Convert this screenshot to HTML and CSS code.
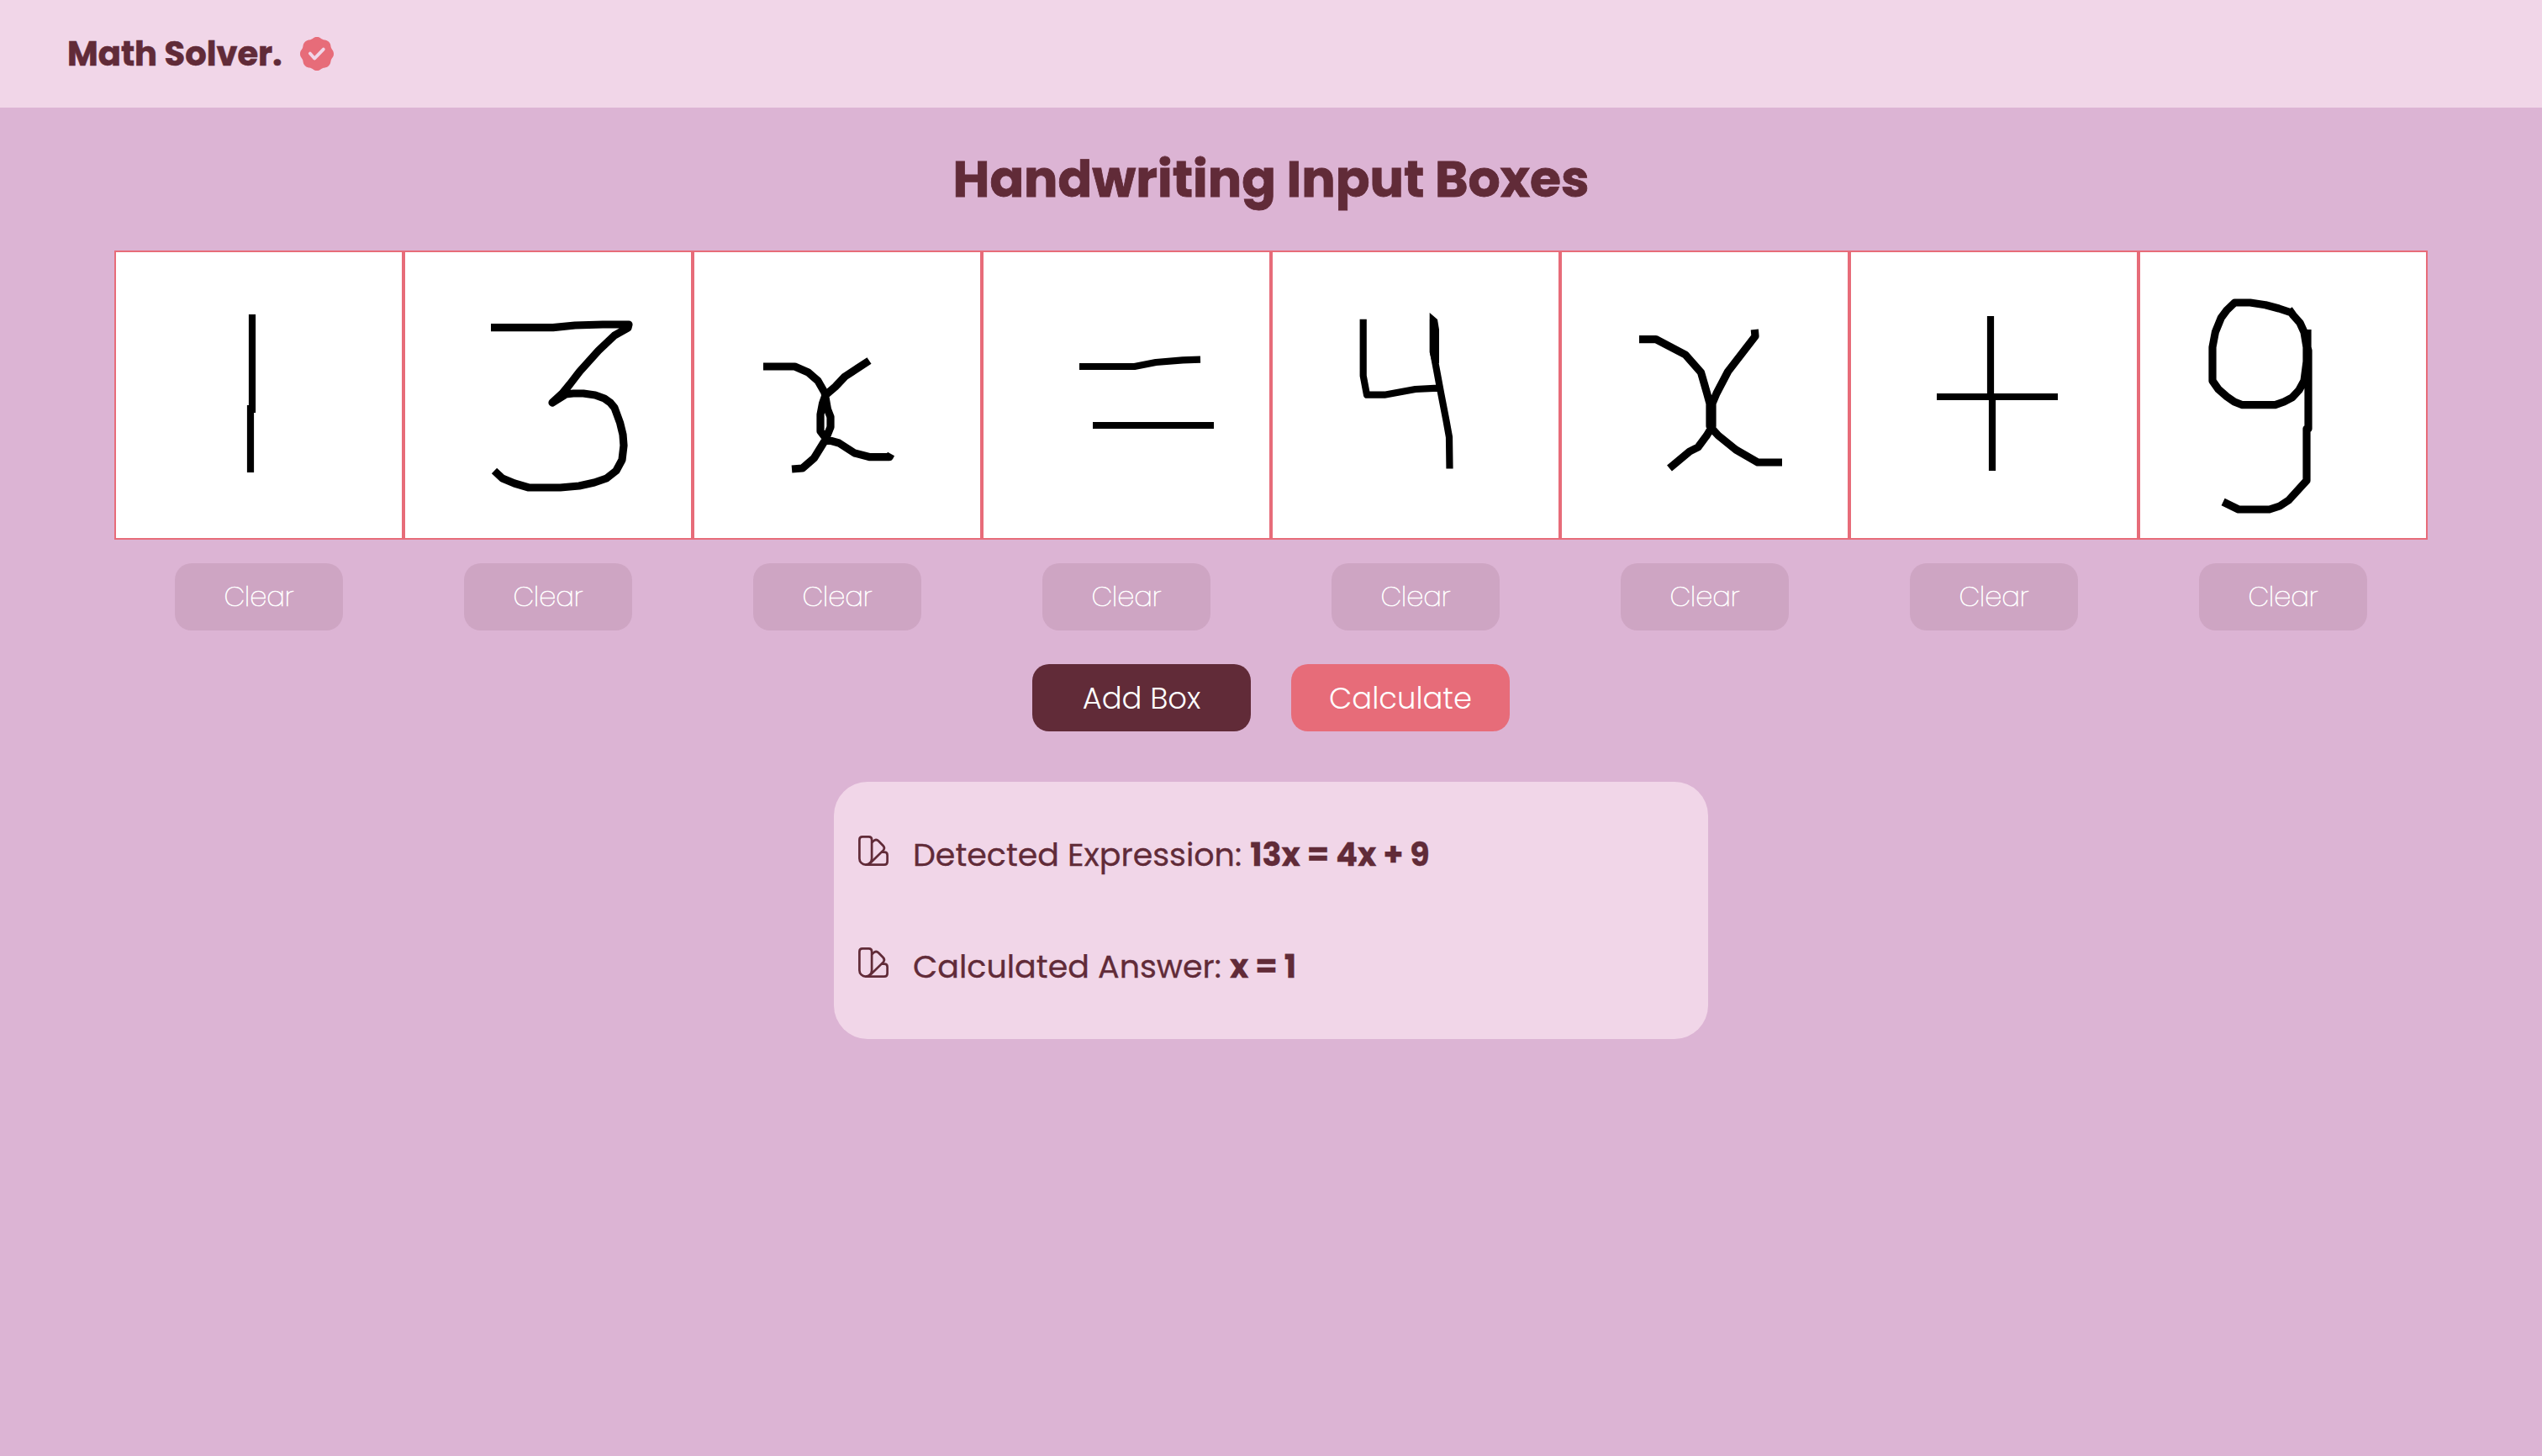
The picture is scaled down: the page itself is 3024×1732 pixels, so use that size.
FILE: index.html
```
<!DOCTYPE html>
<html lang="en">
<head>
  <meta charset="utf-8">
  <title>Math Solver</title>
  <link rel="stylesheet" href="styles.css">
</head>
<body>
  <header class="navbar">
    <span class="brand">Math Solver.</span>
    <svg class="badge" viewBox="-20 -20 40 40" aria-hidden="true">
      <path class="badge-shape" d="M0-20C3.8-20 4.82-17.92 7.04-17C9.26-16.08 11.45-16.83 14.14-14.14C16.83-11.45 16.08-9.26 17-7.04C17.92-4.82 20-3.8 20 0C20 3.8 17.92 4.82 17 7.04C16.08 9.26 16.83 11.45 14.14 14.14C11.45 16.83 9.26 16.08 7.04 17C4.82 17.92 3.8 20 0 20C-3.8 20-4.82 17.92-7.04 17C-9.26 16.08-11.45 16.83-14.14 14.14C-16.83 11.45-16.08 9.26-17 7.04C-17.92 4.82-20 3.8-20 0C-20-3.8-17.92-4.82-17-7.04C-16.08-9.26-16.83-11.45-14.14-14.14C-11.45-16.83-9.26-16.08-7.04-17C-4.82-17.92-3.8-20 0-20Z"/>
      <path class="badge-check" d="M-8.2-.4L-2.9 5.6L7.8-5.4"/>
    </svg>
  </header>

  <main class="main">
    <h1 class="title">Handwriting Input Boxes</h1>

    <section class="boxes">
      <div class="box">
        <svg class="canvas" viewBox="0 0 340 340"><path d="M162 74V191M160 182V262"/></svg>
        <button class="btn btn-clear">Clear</button>
      </div>
      <div class="box">
        <svg class="canvas curved" viewBox="0 0 340 340"><path d="M102 89.7H176L202 87L235 86H266L265 90L249 99L230 117L207.500 142L196 157L187 168L175 179L191 169L200 168H212L226 170L237 174L244 179L249 185L255.600 203L259 217L260 230L258 247L251 260L239.500 269L225 274L207 278L184.500 280H147L130 275L115.600 269L106 260"/></svg>
        <button class="btn btn-clear">Clear</button>
      </div>
      <div class="box">
        <svg class="canvas curved" viewBox="0 0 340 340"><path d="M82 136H119.500L135.500 143L147 153L155 167L158.500 187L162 196V208L156 223L142.400 245L128.600 257L116 258M208 129L179 148L167.700 160L156 170L152.500 180L150 193V213L157.600 223L172 227L190.600 239L209 243.700H232L234 240"/></svg>
        <button class="btn btn-clear">Clear</button>
      </div>
      <div class="box">
        <svg class="canvas" viewBox="0 0 340 340"><path d="M114 136H179.600L205 131L237 128.300L258 127.700M130 206H274"/></svg>
        <button class="btn btn-clear">Clear</button>
      </div>
      <div class="box">
        <svg class="canvas" viewBox="0 0 340 340"><path d="M107.700 79.700V147L112 169.700H133L169.700 163L197 161.700M191 80V119L195 140L200 167L206.400 200L210 220L210.500 257.500"/><path class="ink" d="M186.700 72L196 80L198 92V132L190 132L186.700 119Z"/></svg>
        <button class="btn btn-clear">Clear</button>
      </div>
      <div class="box">
        <svg class="canvas curved" viewBox="0 0 340 340"><path d="M92 103.700H112L147 122L165.500 143L172.400 167L176 180V207L186 218L207 235L233 250H262M229.300 92L230 100L197.600 142L184 168L179 180V207L172.400 218L162 232L152 237L128 257"/></svg>
        <button class="btn btn-clear">Clear</button>
      </div>
      <div class="box">
        <svg class="canvas" viewBox="0 0 340 340"><path d="M102 172H246M166 76V172M168 172V260"/></svg>
        <button class="btn btn-clear">Clear</button>
      </div>
      <div class="box">
        <svg class="canvas curved" viewBox="0 0 340 340"><path d="M180 72L165 67L149 62.700L130.800 60H112.400L103 69L96.300 78L89.400 95L86 113V153L93 163L103 171.700L112 178L121.600 181.700H160.600L171 178L181 172.700L189 164L195 153L198 130V113L195 95L190 84L182 75L177 68M199 92V113L200 117V210H198V271.700L176.700 295L166 302L153.700 306H117L98.600 297"/></svg>
        <button class="btn btn-clear">Clear</button>
      </div>
    </section>

    <div class="actions">
      <button class="btn btn-add">Add Box</button>
      <button class="btn btn-calc">Calculate</button>
    </div>

    <section class="card">
      <div class="row">
        <svg class="swatch" viewBox="0 0 36 36" aria-hidden="true">
          <path d="M5 1.400H12.500Q16.100 1.400 16.100 5V27.200A7.350 7.350 0 0 1 1.400 27.200V5Q1.400 1.400 5 1.400Z"/>
          <path d="M16.100 8.200L18.300 6.200Q21.300 3.600 24.200 6.500L29.600 12Q32.200 14.800 29.700 17.600L13.700 33.200"/>
          <path d="M27.800 19.600H31Q34.600 19.600 34.600 23.200V31Q34.600 34.600 31 34.600H8.700"/>
        </svg>
        <p class="text">Detected Expression: <b>13x = 4x + 9</b></p>
      </div>
      <div class="row">
        <svg class="swatch" viewBox="0 0 36 36" aria-hidden="true">
          <path d="M5 1.400H12.500Q16.100 1.400 16.100 5V27.200A7.350 7.350 0 0 1 1.400 27.200V5Q1.400 1.400 5 1.400Z"/>
          <path d="M16.100 8.200L18.300 6.200Q21.300 3.600 24.200 6.500L29.600 12Q32.200 14.800 29.700 17.600L13.700 33.200"/>
          <path d="M27.800 19.600H31Q34.600 19.600 34.600 23.200V31Q34.600 34.600 31 34.600H8.700"/>
        </svg>
        <p class="text">Calculated Answer: <b>x = 1</b></p>
      </div>
    </section>
  </main>
</body>
</html>
```
FILE: styles.css
```
* {
  box-sizing: border-box;
  margin: 0;
  padding: 0;
}

body {
  min-height: 100vh;
  background: #dcb4d4;
  color: #612b38;
  font-family: Poppins, Inter, sans-serif;
}

.navbar {
  display: flex;
  align-items: center;
  gap: 21px;
  height: 128px;
  padding: 0 80px;
  background: #f1d6e8;
}

.brand {
  font-size: 40px;
  font-weight: 700;
  line-height: 60px;
  -webkit-text-stroke: .6px #612b38;
}

.badge {
  width: 40px;
  height: 40px;
}

.badge-shape {
  fill: #e76c79;
}

.badge-check {
  fill: none;
  stroke: #f1d6e8;
  stroke-width: 3.8;
  stroke-linecap: round;
  stroke-linejoin: round;
}

.main {
  display: flex;
  flex-direction: column;
  align-items: center;
  padding-top: 40px;
}

.title {
  margin-bottom: 40px;
  font-size: 60px;
  font-weight: 700;
  line-height: 90px;
  -webkit-text-stroke: .8px #612b38;
}

.boxes {
  display: flex;
}

.box {
  display: flex;
  flex-direction: column;
  align-items: center;
  gap: 28px;
}

.canvas {
  width: 344px;
  height: 344px;
  border: 2px solid #e76c79;
  background: #fff;
  fill: none;
  stroke: #000;
  stroke-width: 8.2;
  stroke-linejoin: round;
}

.curved {
  stroke-width: 9.2;
}

.ink {
  fill: #000;
  stroke: none;
}

.btn {
  height: 80px;
  border: 0;
  border-radius: 20px;
  color: #fff;
  font-family: inherit;
}

.btn-clear {
  width: 200px;
  background: #cea5c3;
  font-size: 32px;
  font-weight: 200;
  -webkit-text-stroke: .7px #fff;
}

.actions {
  display: flex;
  gap: 48px;
  margin-top: 40px;
}

.btn-add,
.btn-calc {
  width: 260px;
  font-size: 35.4px;
  font-weight: 300;
}

.btn-add {
  background: #612b38;
}

.btn-calc {
  background: #e76c79;
}

.card {
  display: flex;
  flex-direction: column;
  gap: 75px;
  width: 1040px;
  height: 306px;
  margin-top: 60px;
  padding: 58px 29px;
  border-radius: 40px;
  background: #f1d6e8;
}

.row {
  display: flex;
  gap: 29px;
}

.swatch {
  width: 36px;
  height: 36px;
  margin-top: 6px;
  fill: none;
  stroke: #612b38;
  stroke-width: 2.7;
  stroke-linejoin: round;
}

.text {
  font-size: 38px;
  line-height: 58px;
  -webkit-text-stroke: .3px #612b38;
}

.text b {
  font-weight: 700;
}
```
